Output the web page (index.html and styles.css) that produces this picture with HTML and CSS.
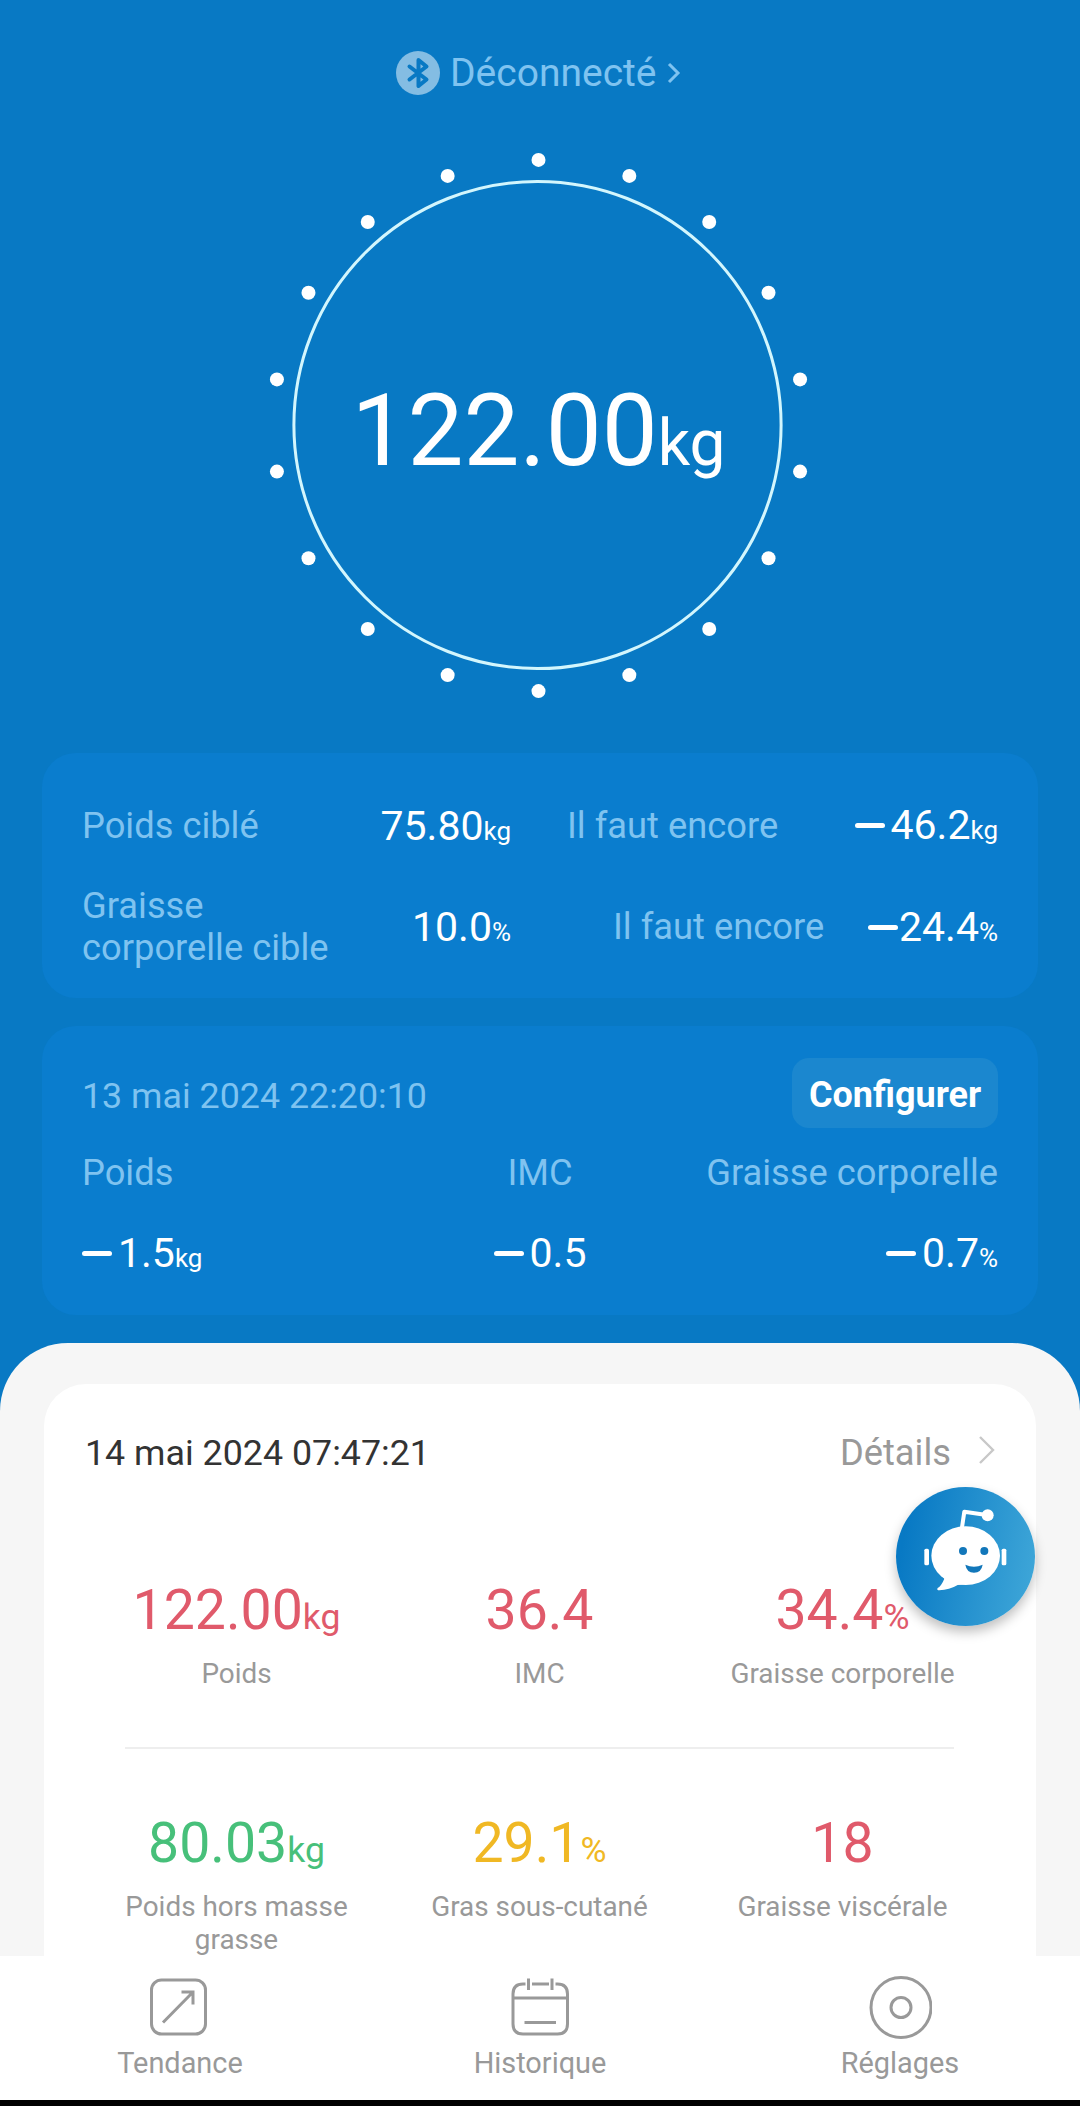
FILE: index.html
```
<!DOCTYPE html>
<html lang="fr">
<head>
    <meta charset="UTF-8">
    <meta name="viewport" content="width=device-width, initial-scale=1.0">
    <title>Balance</title>
    <link rel="stylesheet" href="styles.css">
</head>
<body>
<div class="top">
    <div class="status">
        <svg class="bluetooth" viewBox="0 0 44 44">
            <circle cx="22" cy="22" r="22" fill="#84bde3"/>
            <path d="M13.5 15.5 L30.5 28.5 L22.5 35 V9 L30.5 15.5 L13.5 28.5" fill="none" stroke="#0879c4" stroke-width="4" stroke-linecap="round" stroke-linejoin="round"/>
        </svg>
        <span>Déconnecté</span>
        <svg class="status-arrow" viewBox="0 0 14 22">
            <path d="M2 2 L11 11 L2 20" fill="none" stroke="#7fc3f0" stroke-width="3"/>
        </svg>
    </div>

    <div class="dial">
        <svg class="dial-ring" viewBox="0 0 560 560">
            <circle cx="278.5" cy="280" r="243.6" fill="none" stroke="#d3f6fd" stroke-width="3"/>
            <g id="dots" fill="white"></g>
        </svg>
        <div class="dial-value">122.00<small>kg</small></div>
    </div>

    <div class="card goals">
        <div class="goal">
            <span class="label">Poids ciblé</span>
            <span class="value target">75.80<small>kg</small></span>
            <span class="label left-over">Il faut encore</span>
            <span class="value raised"><i class="minus"></i>46.2<small>kg</small></span>
        </div>
        <div class="goal">
            <span class="label">Graisse<br>corporelle cible</span>
            <span class="value target">10.0<small>%</small></span>
            <span class="label left-over">Il faut encore</span>
            <span class="value"><i class="minus tight"></i>24.4<small>%</small></span>
        </div>
    </div>

    <div class="card compare">
        <div class="compare-head">
            <span class="label date">13 mai 2024 22:20:10</span>
            <button type="button">Configurer</button>
        </div>
        <div class="compare-row">
            <span class="label">Poids</span>
            <span class="label">IMC</span>
            <span class="label">Graisse corporelle</span>
        </div>
        <div class="compare-row compare-values">
            <span class="value"><i class="minus"></i>1.5<small>kg</small></span>
            <span class="value"><i class="minus"></i>0.5</span>
            <span class="value"><i class="minus"></i>0.7<small>%</small></span>
        </div>
    </div>
</div>

<div class="sheet">
    <div class="report">
        <div class="report-head">
            <span>14 mai 2024 07:47:21</span>
            <span class="details">Détails
                <svg viewBox="0 0 18 28"><path d="M2 1 L15 14 L2 27" fill="none" stroke="#c8c8c8" stroke-width="2.4"/></svg>
            </span>
        </div>
        <div class="metrics">
            <div class="metric red"><b>122.00<small>kg</small></b><p>Poids</p></div>
            <div class="metric red"><b>36.4</b><p>IMC</p></div>
            <div class="metric red"><b>34.4<small>%</small></b><p>Graisse corporelle</p></div>
        </div>
        <div class="divider"></div>
        <div class="metrics">
            <div class="metric green"><b>80.03<small>kg</small></b><p>Poids hors masse<br>grasse</p></div>
            <div class="metric yellow"><b>29.1<small>%</small></b><p>Gras sous-cutané</p></div>
            <div class="metric red"><b>18</b><p>Graisse viscérale</p></div>
        </div>
    </div>
</div>

<div class="nav">
    <div class="nav-item">
        <svg viewBox="0 0 64 64">
            <rect x="3.5" y="5" width="54" height="54" rx="10"/>
            <path d="M15 47.5 L44.5 17.5 M33.5 17 H45 V29.5"/>
        </svg>
        <span>Tendance</span>
    </div>
    <div class="nav-item">
        <svg viewBox="0 0 64 64">
            <path d="M17.5 9 H15 Q5 9 5 19 V49 Q5 59 15 59 H49.5 Q59.5 59 59.5 49 V19 Q59.5 9 49.5 9 H47.5 M24 9 H41 M5 23 H59.5 M16.5 47.5 H48 M20.5 3.5 V15 M44 3.5 V15"/>
        </svg>
        <span>Historique</span>
    </div>
    <div class="nav-item">
        <svg viewBox="0 0 64 64">
            <circle cx="33" cy="32.5" r="30"/>
            <circle cx="33" cy="32.5" r="10"/>
        </svg>
        <span>Réglages</span>
    </div>
</div>

<!-- floating assistant -->
<div class="bot">
    <svg viewBox="0 0 417 417">
        <path d="M197 128 L205 74 L272 84" fill="none" stroke="white" stroke-width="12" stroke-linejoin="round"/>
        <circle cx="275" cy="85" r="18" fill="white"/>
        <ellipse cx="209" cy="206" rx="103" ry="88" fill="white"/>
        <path d="M133 255 L145 275 Q136 297 125 303 Q121 310 130 310 Q160 309 185 294 L225 290 Z" fill="white"/>
        <rect x="85" y="185" width="14" height="50" rx="5" fill="white"/>
        <rect x="317" y="185" width="14" height="50" rx="5" fill="white"/>
        <circle cx="201" cy="192" r="12" fill="#1277ba"/>
        <circle cx="265" cy="192" r="12" fill="#1277ba"/>
        <path d="M208 233 Q234 245 260 233 Q256 257 234 257 Q212 257 208 233 Z" fill="#1277ba"/>
    </svg>
</div>

<script>
    // 18 ticks around the dial
    const dots = document.getElementById("dots");
    for (let i = 0; i < 18; i++) {
        const angle = i * 20 * Math.PI / 180;
        const dot = document.createElementNS("http://www.w3.org/2000/svg", "circle");
        dot.setAttribute("cx", 279.5 + 265.6 * Math.sin(angle));
        dot.setAttribute("cy", 280.5 - 265.6 * Math.cos(angle));
        dot.setAttribute("r", 7);
        dots.appendChild(dot);
    }
</script>
</body>
</html>
```
FILE: styles.css
```
* {
    box-sizing: border-box;
}
body {
    background-color: #0879c4;
    font-family: Roboto, Arial, sans-serif;
    margin: 0;
    height: 2106px;
    overflow: hidden;
    display: flex;
    flex-direction: column;
    position: relative;
}
/* units must not change the line height of the number they follow */
small {
    line-height: 0;
}
.top {
    height: 1343px;
    padding: 0 42px;
    flex-shrink: 0;
}
.status {
    display: flex;
    align-items: center;
    height: 145px;
    padding-left: 354px;
    color: #7fc3f0;
    font-size: 39px;
}
.status span {
    padding-top: 1px;
}
.bluetooth {
    width: 44px;
    height: 44px;
    margin-right: 10px;
}
.status-arrow {
    width: 14px;
    height: 22px;
    margin-left: 10px;
}
.dial {
    display: grid;
    place-items: center;
    width: 560px;
    height: 560px;
    margin: 0 auto 48px 217px;
}
.dial-ring, .dial-value {
    grid-area: 1 / 1;
}
.dial-ring {
    width: 560px;
    height: 560px;
}
.dial-value {
    color: white;
    font-size: 99.6px;
    line-height: 120px;
    padding-top: 11px;
    padding-right: 1px;
}
.dial-value small {
    font-size: 64px;
}
.card {
    background-color: #0a7dce;
    border-radius: 34px;
    padding: 0 40px;
}
.label {
    color: #7fc3f0;
    font-size: 36.3px;
    line-height: 42px;
}
.label.date {
    font-size: 35.8px;
}
.value {
    color: white;
    font-size: 41px;
    line-height: 48px;
    white-space: nowrap;
}
.value small {
    font-size: 26px;
}
.minus {
    display: inline-block;
    width: 30px;
    height: 5px;
    border-radius: 2.5px;
    background-color: white;
    margin-right: 6px;
    vertical-align: 11px;
}
.minus.tight {
    margin-right: 1px;
}
.goals {
    height: 245px;
    padding-top: 41px;
    margin-bottom: 28px;
}
.goal {
    display: grid;
    grid-template-columns: 270px 159px 1fr auto;
    align-items: center;
    height: 64px;
}
.goal + .goal {
    height: 84px;
    margin-top: 27px;
}
.target {
    text-align: right;
}
.left-over {
    padding-left: 56px;
}
.goal + .goal .left-over {
    padding-left: 102px;
}
.raised {
    padding-bottom: 3px;
}
.compare {
    height: 289px;
    padding-top: 32px;
}
.compare-head {
    display: flex;
    justify-content: space-between;
    align-items: center;
    height: 70px;
    margin-bottom: 24px;
}
.compare-head .label {
    padding-top: 6px;
}
button {
    width: 206px;
    height: 70px;
    border: none;
    border-radius: 17px;
    background-color: #1b87cf;
    color: white;
    font-family: inherit;
    font-size: 36px;
    font-weight: bold;
    padding: 4px 0 0;
}
.compare-row {
    display: grid;
    grid-template-columns: 1fr auto 1fr;
}
.compare-row span:last-child {
    text-align: right;
}
.compare-values {
    margin-top: 35px;
}
.sheet {
    background-color: #f6f6f6;
    border-radius: 68px 68px 0 0;
    height: 613px;
    padding: 41px 44px 0;
    overflow: hidden;
    flex-shrink: 0;
}
.report {
    background-color: white;
    border-radius: 42px 42px 0 0;
    height: 572px;
    padding: 0 41px;
}
.report-head {
    display: flex;
    justify-content: space-between;
    padding: 48px 0 0;
    height: 186px;
    color: #333;
    font-size: 35.8px;
    line-height: 42px;
}
.details {
    display: flex;
    color: #999;
    font-size: 36.3px;
}
.details svg {
    width: 18px;
    height: 28px;
    margin: 4px -1px 0 27px;
}
.metrics {
    display: grid;
    grid-template-columns: repeat(3, 303px);
    text-align: center;
}
.metric b {
    display: block;
    font-size: 55.4px;
    font-weight: normal;
    line-height: 82px;
}
.metric small {
    font-size: 35.6px;
}
.metric p {
    margin: 5px 0 0;
    color: #999;
    font-size: 27.9px;
    line-height: 33px;
}
.red {
    color: #e05a6b;
}
.green {
    color: #47c07a;
}
.yellow {
    color: #f0b824;
}
.divider {
    height: 2px;
    margin: 57px 41px 54px 40px;
    background-color: #eee;
}
.nav {
    display: flex;
    height: 150px;
    padding-top: 19px;
    background-color: white;
    border-bottom: 6px solid black;
    flex-shrink: 0;
}
.nav-item {
    flex: 1;
    display: flex;
    flex-direction: column;
    align-items: center;
    color: #999;
    font-size: 28.9px;
    line-height: 34px;
}
.nav-item svg {
    width: 64px;
    height: 64px;
    margin-bottom: 7px;
    fill: none;
    stroke: #999;
    stroke-width: 3;
}
.bot {
    position: absolute;
    left: 896px;
    top: 1487px;
    width: 139px;
    height: 139px;
    border-radius: 50%;
    background: linear-gradient(100deg, #0879c4 10%, #3ea6d8 95%);
    box-shadow: 0 6px 12px rgba(0, 0, 0, 0.25);
}
.bot svg {
    display: block;
    width: 139px;
    height: 139px;
}
```
